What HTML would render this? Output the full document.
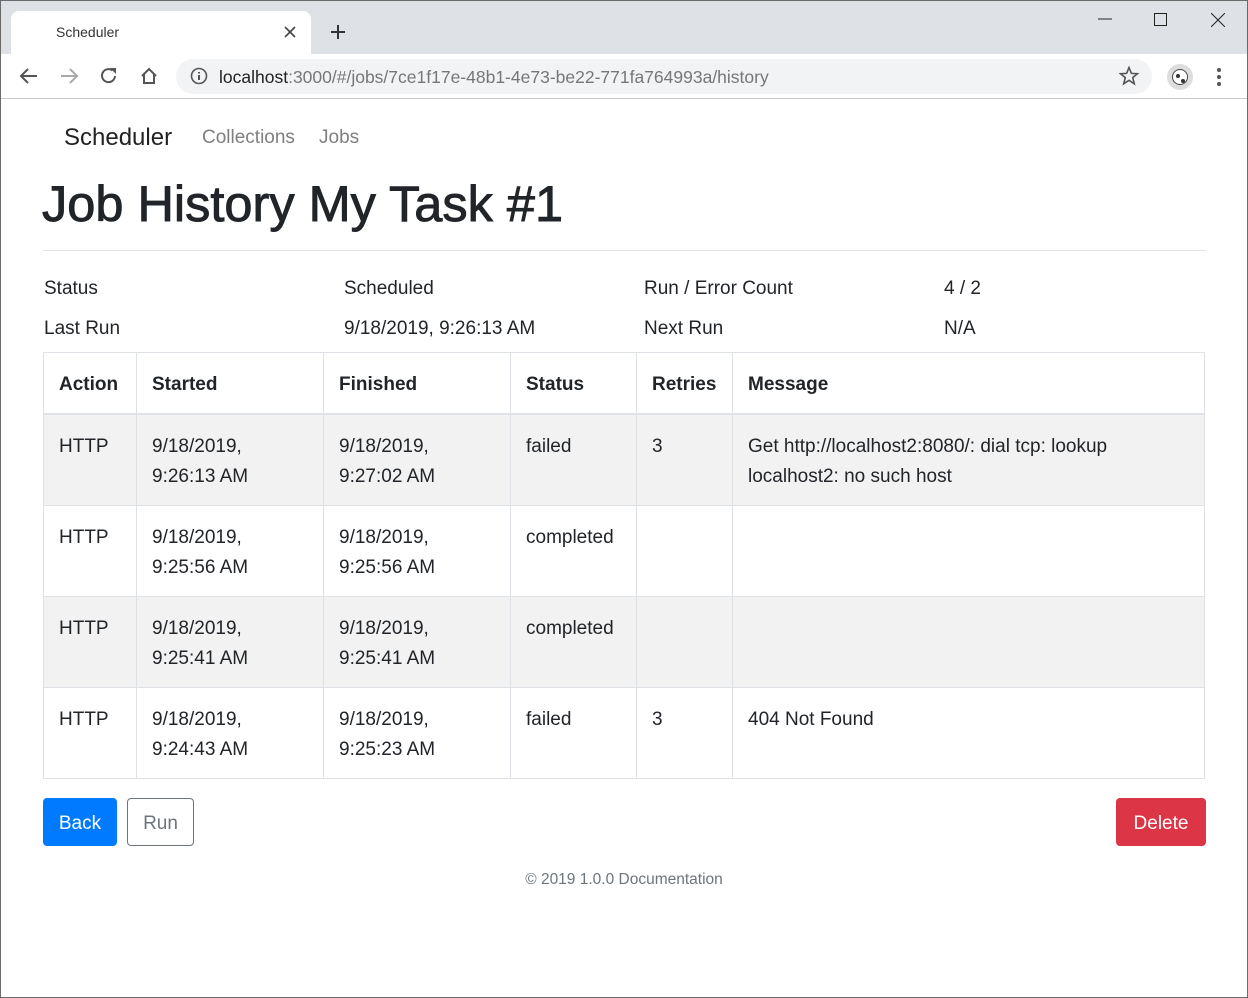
<!DOCTYPE html>
<html><head><meta charset="utf-8"><style>
*{box-sizing:border-box;margin:0;padding:0}
body{width:1248px;height:998px;overflow:hidden;font-family:"Liberation Sans",sans-serif;color:#212529;background:#fff;position:relative}
.win{position:absolute;inset:0;border:1px solid #6b6b6b}
.tabbar{position:absolute;left:1px;top:1px;right:1px;height:53px;background:#dee1e6}
.tab{position:absolute;left:11px;top:11px;width:300px;height:43px;background:#fff;border-radius:8px 8px 0 0}
.a{position:absolute;white-space:nowrap}
.toolbar{position:absolute;left:1px;top:54px;right:1px;height:45px;background:#fff;border-bottom:1px solid #c8c8c8}
.url{position:absolute;left:176px;top:59px;width:976px;height:35px;border-radius:18px;background:#f1f3f4}
.t{font-size:19px}
table{position:absolute;left:43px;top:352px;width:1162px;border-collapse:collapse;font-size:19px}
td,th{border:1px solid #dee2e6;padding:17px 15px 13px;vertical-align:top;text-align:left;line-height:30px}
th{font-weight:bold;border-bottom:2px solid #dee2e6;height:61px}
td{height:91px}
tr.s td{background:#f2f2f2}
.btn{position:absolute;top:798px;height:48px;border-radius:4px;font-size:19px;line-height:52px;text-align:center}
</style></head><body>
<div class="win"></div>
<div class="tabbar"></div>
<div class="tab"></div>
<div class="a" style="left:56px;top:24px;font-size:14px;color:#333">Scheduler</div>
<svg class="a" style="left:284px;top:26px" width="12" height="12"><path d="M1 1L11 11M11 1L1 11" stroke="#444" stroke-width="1.6"/></svg>
<svg class="a" style="left:330px;top:24px" width="16" height="16"><path d="M8 1V15M1 8H15" stroke="#333" stroke-width="2"/></svg>
<svg class="a" style="left:1098px;top:18px" width="14" height="2"><path d="M0 1H14" stroke="#222"/></svg>
<svg class="a" style="left:1154px;top:13px" width="14" height="14"><rect x="0.5" y="0.5" width="12" height="12" fill="none" stroke="#222"/></svg>
<svg class="a" style="left:1211px;top:13px" width="14" height="14"><path d="M0 0L14 14M14 0L0 14" stroke="#222"/></svg>
<div class="toolbar"></div>
<svg class="a" style="left:19px;top:67px" width="20" height="18"><path d="M18 9H3M9 2L2 9L9 16" stroke="#555" stroke-width="2" fill="none"/></svg>
<svg class="a" style="left:59px;top:67px" width="20" height="18"><path d="M2 9H17M11 2L18 9L11 16" stroke="#aaa" stroke-width="2" fill="none"/></svg>
<svg class="a" style="left:99px;top:66px" width="20" height="20"><path d="M16 10A6.5 6.5 0 1 1 13.5 4.5" stroke="#555" stroke-width="2" fill="none"/><path d="M11 2H17V8Z" fill="#555"/></svg>
<svg class="a" style="left:139px;top:66px" width="20" height="20"><path d="M3 10L10 3L17 10M5 8V17H15V8" stroke="#555" stroke-width="2" fill="none"/></svg>
<div class="url"></div>
<svg class="a" style="left:190px;top:67px" width="18" height="18"><circle cx="9" cy="9" r="7.5" stroke="#555" stroke-width="1.6" fill="none"/><path d="M9 8V13M9 5V6.5" stroke="#555" stroke-width="2"/></svg>
<div class="a" style="left:219px;top:67px;font-size:17.5px;color:#222">localhost<span style="color:#777">:3000/#/jobs/7ce1f17e-48b1-4e73-be22-771fa764993a/history</span></div>
<svg class="a" style="left:1119px;top:66px" width="20" height="20"><path d="M10 1.5L12.4 7.4L18.5 7.7L13.7 11.6L15.3 17.8L10 14.3L4.7 17.8L6.3 11.6L1.5 7.7L7.6 7.4Z" stroke="#555" stroke-width="1.6" fill="none"/></svg>
<div class="a" style="left:1167px;top:64px;width:26px;height:26px;border-radius:50%;background:#ddd"></div>
<div class="a" style="left:1172px;top:69px;width:16px;height:16px;border-radius:50%;background:#fff;border:1px solid #444"></div>
<div class="a" style="left:1176px;top:74px;width:4px;height:4px;border-radius:50%;background:#333"></div>
<div class="a" style="left:1181px;top:79px;width:4px;height:4px;border-radius:50%;background:#333"></div>
<svg class="a" style="left:1216px;top:67px" width="6" height="20"><circle cx="3" cy="3" r="2" fill="#555"/><circle cx="3" cy="10" r="2" fill="#555"/><circle cx="3" cy="17" r="2" fill="#555"/></svg>

<div class="a" style="left:64px;top:124px;font-size:24px;color:#222">Scheduler</div>
<div class="a" style="left:202px;top:127px;font-size:19px;color:#7f7f7f">Collections</div>
<div class="a" style="left:319px;top:127px;font-size:19px;color:#7f7f7f">Jobs</div>
<div class="a" style="left:42px;top:174px;font-size:50.5px;color:#212529;-webkit-text-stroke:0.9px #212529">Job History My Task #1</div>
<div class="a" style="left:43px;top:250px;width:1163px;height:1px;background:#e5e5e5"></div>

<div class="a t" style="left:44px;top:278px">Status</div>
<div class="a t" style="left:344px;top:278px">Scheduled</div>
<div class="a t" style="left:644px;top:278px">Run / Error Count</div>
<div class="a t" style="left:944px;top:278px">4 / 2</div>
<div class="a t" style="left:44px;top:318px">Last Run</div>
<div class="a t" style="left:344px;top:318px">9/18/2019, 9:26:13 AM</div>
<div class="a t" style="left:644px;top:318px">Next Run</div>
<div class="a t" style="left:944px;top:318px">N/A</div>

<table>
<colgroup><col style="width:93px"><col style="width:187px"><col style="width:187px"><col style="width:126px"><col style="width:96px"><col></colgroup>
<tr><th>Action</th><th>Started</th><th>Finished</th><th>Status</th><th>Retries</th><th>Message</th></tr>
<tr class="s"><td>HTTP</td><td>9/18/2019,<br>9:26:13 AM</td><td>9/18/2019,<br>9:27:02 AM</td><td>failed</td><td>3</td><td>Get http://localhost2:8080/: dial tcp: lookup localhost2: no such host</td></tr>
<tr><td>HTTP</td><td>9/18/2019,<br>9:25:56 AM</td><td>9/18/2019,<br>9:25:56 AM</td><td>completed</td><td></td><td></td></tr>
<tr class="s"><td>HTTP</td><td>9/18/2019,<br>9:25:41 AM</td><td>9/18/2019,<br>9:25:41 AM</td><td>completed</td><td></td><td></td></tr>
<tr><td>HTTP</td><td>9/18/2019,<br>9:24:43 AM</td><td>9/18/2019,<br>9:25:23 AM</td><td>failed</td><td>3</td><td>404 Not Found</td></tr>
</table>

<div class="btn" style="left:43px;width:74px;background:#007bff;color:#fff">Back</div>
<div class="btn" style="left:127px;width:67px;border:1px solid #6c757d;color:#6c757d;line-height:50px">Run</div>
<div class="btn" style="left:1116px;width:90px;background:#dc3545;color:#fff">Delete</div>
<div class="a" style="left:0;width:1248px;text-align:center;top:871px;font-size:15.5px;color:#6c757d">© 2019 1.0.0 Documentation</div>
</body></html>
